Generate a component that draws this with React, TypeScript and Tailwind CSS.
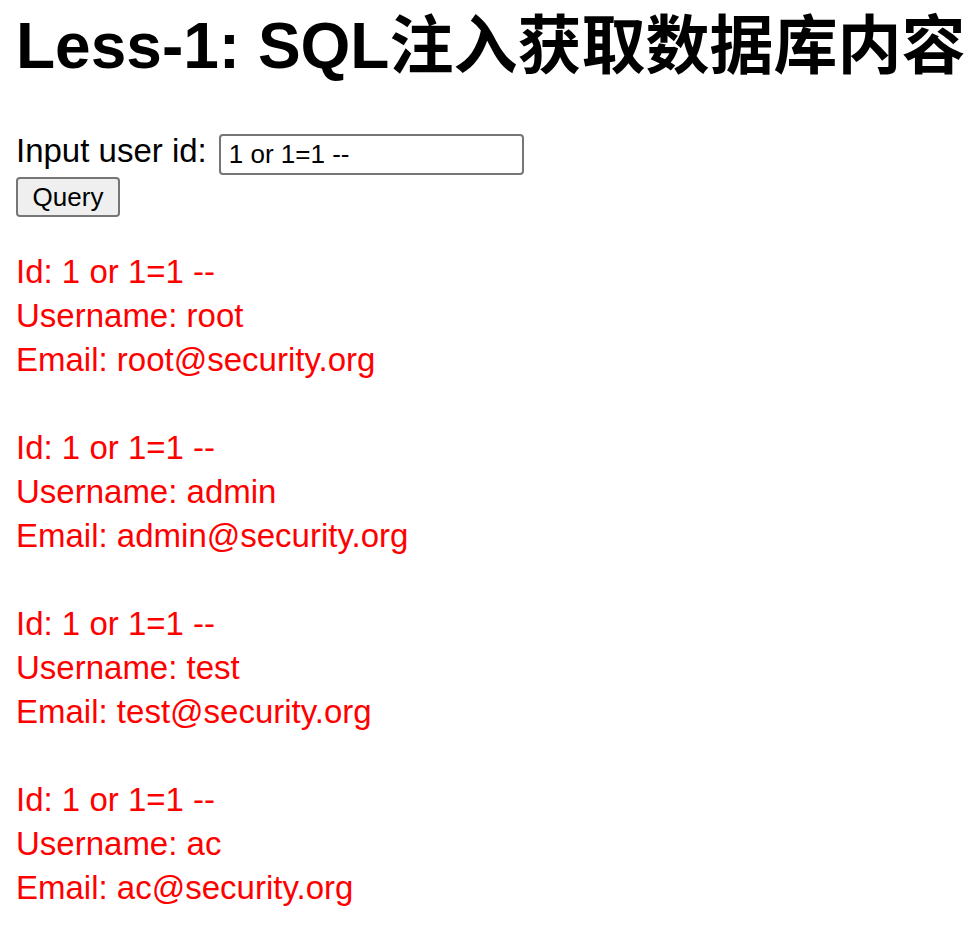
import { FC } from "react";

interface Row {
  id: string;
  username: string;
  email: string;
}

const rows: Row[] = [
  { id: "1 or 1=1 --", username: "root", email: "root@security.org" },
  { id: "1 or 1=1 --", username: "admin", email: "admin@security.org" },
  { id: "1 or 1=1 --", username: "test", email: "test@security.org" },
  { id: "1 or 1=1 --", username: "ac", email: "ac@security.org" },
];

const App: FC = () => {
  return (
    <div className="min-h-screen bg-white px-4 pt-[8px] text-black font-['Liberation_Sans','Noto_Sans_CJK_SC',sans-serif] overflow-hidden">
      <h1 className="text-[64px] font-bold leading-[76px] whitespace-nowrap">
        Less-1: SQL注入获取数据库内容
      </h1>

      <div className="mt-[50px] flex items-start">
        <label className="text-[33px] leading-[32px] mt-[1px]">
          Input user id:
        </label>
        <input
          type="text"
          defaultValue="1 or 1=1 --"
          className="ml-[12px] w-[305px] h-[41px] px-[8px] text-[26px] 
            border-2 border-[#767676] rounded-[4px] outline-none bg-white
            font-['Liberation_Sans',sans-serif]"
        />
      </div>

      <button
        type="button"
        className="mt-[2px] w-[104px] h-[40px] flex items-center justify-center 
          text-[26px] bg-[#efefef] border-2 border-[#767676] rounded-[4px]"
      >
        Query
      </button>

      <div className="mt-[33px] text-[33px] leading-[44px] text-[#ff0000]">
        {rows.map((row, i) => (
          <div key={i} className={i < rows.length - 1 ? "mb-[44px]" : ""}>
            <div>Id: {row.id}</div>
            <div>Username: {row.username}</div>
            <div>Email: {row.email}</div>
          </div>
        ))}
      </div>
    </div>
  );
};

export default App;
